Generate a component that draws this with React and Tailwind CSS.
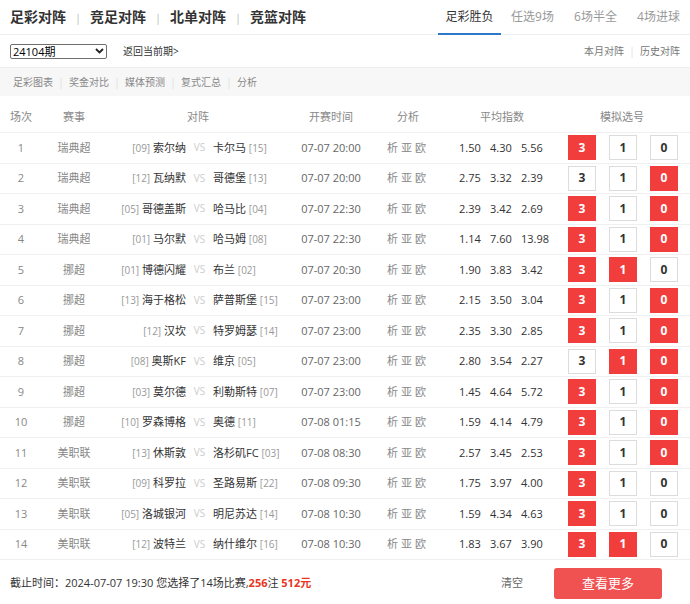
import React from 'react';

const matches = [
  [1, '瑞典超', '[09]', '索尔纳', '卡尔马', '[15]', '07-07 20:00', '1.50', '4.30', '5.56', [3]],
  [2, '瑞典超', '[12]', '瓦纳默', '哥德堡', '[13]', '07-07 20:00', '2.75', '3.32', '2.39', [0]],
  [3, '瑞典超', '[05]', '哥德盖斯', '哈马比', '[04]', '07-07 22:30', '2.39', '3.42', '2.69', [3, 0]],
  [4, '瑞典超', '[01]', '马尔默', '哈马姆', '[08]', '07-07 22:30', '1.14', '7.60', '13.98', [3, 0]],
  [5, '挪超', '[01]', '博德闪耀', '布兰', '[02]', '07-07 20:30', '1.90', '3.83', '3.42', [3, 1]],
  [6, '挪超', '[13]', '海于格松', '萨普斯堡', '[15]', '07-07 23:00', '2.15', '3.50', '3.04', [3, 0]],
  [7, '挪超', '[12]', '汉坎', '特罗姆瑟', '[14]', '07-07 23:00', '2.35', '3.30', '2.85', [3, 0]],
  [8, '挪超', '[08]', '奥斯KF', '维京', '[05]', '07-07 23:00', '2.80', '3.54', '2.27', [1, 0]],
  [9, '挪超', '[03]', '莫尔德', '利勒斯特', '[07]', '07-07 23:00', '1.45', '4.64', '5.72', [3, 0]],
  [10, '挪超', '[10]', '罗森博格', '奥德', '[11]', '07-08 01:15', '1.59', '4.14', '4.79', [3, 0]],
  [11, '美职联', '[13]', '休斯敦', '洛杉矶FC', '[03]', '07-08 08:30', '2.57', '3.45', '2.53', [3, 0]],
  [12, '美职联', '[09]', '科罗拉', '圣路易斯', '[22]', '07-08 09:30', '1.75', '3.97', '4.00', [3]],
  [13, '美职联', '[05]', '洛城银河', '明尼苏达', '[14]', '07-08 10:30', '1.59', '4.34', '4.63', [3]],
  [14, '美职联', '[12]', '波特兰', '纳什维尔', '[16]', '07-08 10:30', '1.83', '3.67', '3.90', [3, 1]],
];

const titles = ['足彩对阵', '竞足对阵', '北单对阵', '竞篮对阵'];
const tabs = ['足彩胜负', '任选9场', '6场半全', '4场进球'];
const tools = ['足彩图表', '奖金对比', '媒体预测', '复式汇总', '分析'];

const PickButton = ({ value, on }) => (
  <div
    className={
      on
        ? 'w-[28px] h-[25px] flex items-center justify-center bg-[#f23d3d] text-white text-[12px] font-bold'
        : 'w-[28px] h-[25px] flex items-center justify-center bg-white border border-[#dcdcdc] text-[#333] text-[12px] font-bold'
    }
  >
    {value}
  </div>
);

const App = () => {
  return (
    <div className="w-[690px] h-[604px] bg-white text-[#333] font-['Open_Sans','Noto_Sans_CJK_SC',sans-serif] overflow-hidden">
      {/* 顶部导航 */}
      <div className="flex justify-between h-[35px] border-b border-[#eeeeee]">
        <div className="flex items-center pl-[10px]">
          {titles.map((t, i) => (
            <React.Fragment key={t}>
              {i > 0 && <span className="w-[24px] text-center text-[11px] text-[#bbb] leading-none">|</span>}
              <span className="text-[14px] font-bold leading-none text-[#333]">{t}</span>
            </React.Fragment>
          ))}
        </div>
        <div className="flex">
          {tabs.map((t, i) => (
            <div
              key={t}
              className={
                i === 0
                  ? 'w-[63px] flex items-center justify-center text-[12px] text-[#333] border-b-2 border-[#2d78c8] -mb-px'
                  : 'w-[63px] flex items-center justify-center text-[12px] text-[#999]'
              }
            >
              {t}
            </div>
          ))}
        </div>
      </div>

      {/* 期号选择 */}
      <div className="flex items-center justify-between h-[33px] px-[10px] border-b border-[#eeeeee]">
        <div className="flex items-center">
          <div className="w-[97px] h-[15px] border border-[#6f6f6f] rounded-[2px] flex items-center justify-between px-[2px] text-[11px] leading-none text-black">
            <span>24104期</span>
            <svg width="9" height="6" viewBox="0 0 9 6">
              <path d="M1 1l3.5 3.5L8 1" fill="none" stroke="#222" strokeWidth="1.8" />
            </svg>
          </div>
          <span className="ml-[16px] text-[10px] text-[#333]">返回当前期&gt;</span>
        </div>
        <div className="flex items-center text-[10px] text-[#777]">
          <span>本月对阵</span>
          <span className="w-[16px] text-center text-[#ddd]">|</span>
          <span>历史对阵</span>
        </div>
      </div>

      {/* 工具栏 */}
      <div className="flex items-center h-[28px] px-[13px] bg-[#f7f7f7] text-[10px] text-[#888]">
        {tools.map((t, i) => (
          <React.Fragment key={t}>
            {i > 0 && <span className="w-[16px] text-center text-[#ddd]">|</span>}
            <span>{t}</span>
          </React.Fragment>
        ))}
      </div>

      {/* 表头 */}
      <div className="mt-[7px] flex items-center h-[30px] border-b border-[#f0f0f0] text-[11px] text-[#888]">
        <div className="w-[42px] text-center">场次</div>
        <div className="w-[64px] text-center">赛事</div>
        <div className="w-[184px] text-center">对阵</div>
        <div className="w-[82px] text-center">开赛时间</div>
        <div className="w-[72px] text-center">分析</div>
        <div className="w-[116px] text-center">平均指数</div>
        <div className="w-[124px] text-center">模拟选号</div>
      </div>

      {/* 比赛列表 */}
      {matches.map((m) => (
        <div key={m[0]} className="flex items-center h-[30.5px] border-b border-[#f0f0f0] text-[11px]">
          <div className="w-[42px] text-center text-[#888]">{m[0]}</div>
          <div className="w-[64px] text-center text-[#888]">{m[1]}</div>
          <div className="w-[184px] flex items-center">
            <div className="w-[80px] text-right whitespace-nowrap">
              <span className="text-[10px] text-[#999]">{m[2]}</span>{' '}
              <span className="text-[#333]">{m[3]}</span>
            </div>
            <div className="w-[27px] text-center text-[10px] text-[#ccc]">VS</div>
            <div className="flex-1 whitespace-nowrap">
              <span className="text-[#333]">{m[4]}</span>{' '}
              <span className="text-[10px] text-[#999]">{m[5]}</span>
            </div>
          </div>
          <div className="w-[82px] text-center text-[#666]">{m[6]}</div>
          <div className="w-[72px] text-center text-[#888] tracking-[3px]">析亚欧</div>
          <div className="w-[116px] flex pl-[15px] text-[#333]">
            <span className="w-[31px]">{m[7]}</span>
            <span className="w-[31px]">{m[8]}</span>
            <span className="w-[31px]">{m[9]}</span>
          </div>
          <div className="flex gap-[13px] pl-[8px]">
            <PickButton value="3" on={m[10].includes(3)} />
            <PickButton value="1" on={m[10].includes(1)} />
            <PickButton value="0" on={m[10].includes(0)} />
          </div>
        </div>
      ))}

      {/* 底部 */}
      <div className="flex items-center justify-between h-[47px] pl-[10px] pr-[28px]">
        <div className="text-[11px] text-[#333]">
          截止时间：2024-07-07 19:30 您选择了14场比赛,
          <span className="text-[#e8361f] font-bold">256</span>注{' '}
          <span className="text-[#e8361f] font-bold">512元</span>
        </div>
        <div className="flex items-center">
          <span className="text-[11px] text-[#666] mr-[31px]">清空</span>
          <button className="w-[108px] h-[31px] rounded-[3px] bg-[#f05252] text-white text-[13px]">查看更多</button>
        </div>
      </div>
    </div>
  );
};

export default App;
